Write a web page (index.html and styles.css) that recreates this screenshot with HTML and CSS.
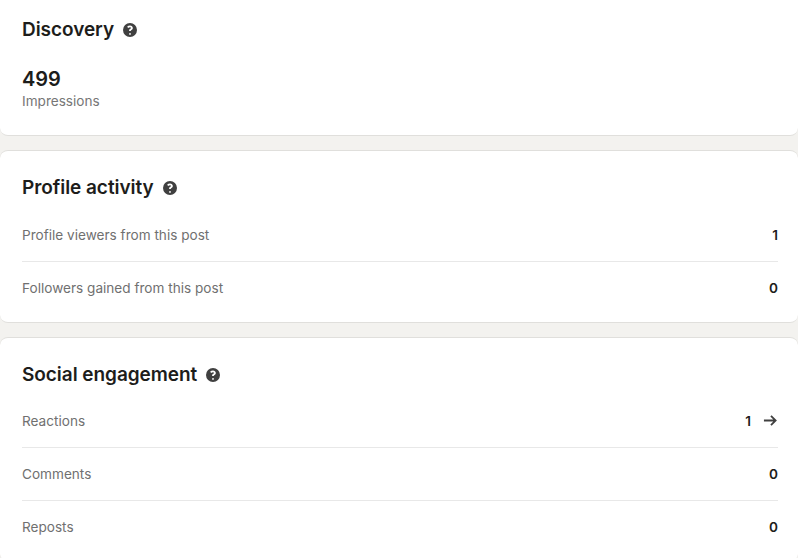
FILE: index.html
```html
<!DOCTYPE html>
<html lang="en">
<head>
    <meta charset="UTF-8">
    <meta name="viewport" content="width=device-width, initial-scale=1.0">
    <title>Post analytics</title>
    <link rel="stylesheet" href="styles.css">
</head>
<body>
    <svg class="sprite" width="0" height="0" aria-hidden="true">
        <symbol id="icon-help" viewBox="0 0 16 16">
            <path fill-rule="evenodd" d="M8 1a7 7 0 1 0 0 14A7 7 0 0 0 8 1zm.9 10.900a.9.9 0 1 1-1.800 0 .9.9 0 0 1 1.800 0zM8 3.600c1.600 0 2.800.9 2.800 2.400 0 1-.6 1.600-1.300 2-.5.3-.7.5-.7.9v.2H7.100v-.4c0-1 .5-1.500 1.100-1.900.5-.3.8-.5.8-.8 0-.4-.4-.7-1-.7-.7 0-1.300.3-1.800.8L5.100 4.800C5.900 4 6.900 3.600 8 3.600z"/>
        </symbol>
    </svg>

    <section class="card card--discovery">
        <h2 class="card__title">Discovery <svg class="card__help"><use href="#icon-help"/></svg></h2>
        <p class="stat__number">499</p>
        <p class="stat__label">Impressions</p>
    </section>

    <section class="card">
        <h2 class="card__title">Profile activity <svg class="card__help"><use href="#icon-help"/></svg></h2>
        <ul class="rows">
            <li class="rows__item"><span>Profile viewers from this post</span><b class="rows__value">1</b></li>
            <li class="rows__item"><span>Followers gained from this post</span><b class="rows__value">0</b></li>
        </ul>
    </section>

    <section class="card">
        <h2 class="card__title">Social engagement <svg class="card__help"><use href="#icon-help"/></svg></h2>
        <ul class="rows rows--social">
            <li class="rows__item">
                <span>Reactions</span>
                <b class="rows__value">1
                    <svg class="rows__arrow" viewBox="0 0 16 16"><path d="M1 8h12.500M8.500 3l5 5-5 5"/></svg>
                </b>
            </li>
            <li class="rows__item"><span>Comments</span><b class="rows__value">0</b></li>
            <li class="rows__item"><span>Reposts</span><b class="rows__value">0</b></li>
        </ul>
    </section>
</body>
</html>
```

FILE: styles.css
```css
* {
    margin: 0;
    padding: 0;
    box-sizing: border-box;
    font-family: Inter, "Liberation Sans", sans-serif;
}

body {
    background-color: #f3f2ef;
    color: #1d1d1b;
    height: 558px;
    overflow: hidden;
}

.sprite {
    display: block;
}

.card {
    background-color: #ffffff;
    border-top: 1px solid #e0dfdc;
    border-bottom: 1px solid #e0dfdc;
    border-radius: 8px;
    margin-bottom: 14px;
    padding: 25px 20px 7px 22px;
}

.card--discovery {
    border-top: none;
    border-radius: 0 0 8px 8px;
    height: 136px;
    padding-top: 18px;
}

.card__title {
    display: flex;
    align-items: center;
    gap: 8px;
    font-size: 19px;
    font-weight: 600;
    line-height: 24px;
    letter-spacing: -0.05px;
}

.card__help {
    width: 16px;
    height: 16px;
    fill: #404040;
}

.stat__number {
    font-size: 20px;
    font-weight: 600;
    line-height: 24px;
    margin-top: 25px;
}

.stat__label {
    font-size: 13.6px;
    line-height: 20px;
    color: #767676;
}

.rows {
    list-style: none;
    margin-top: 9px;
}

.rows--social {
    margin-top: 8px;
}

.rows__item {
    display: flex;
    justify-content: space-between;
    align-items: center;
    height: 53px;
    padding-bottom: 1px;
    font-size: 13.6px;
    color: #707070;
    border-bottom: 1px solid #e8e8e8;
}

.rows__item:last-child {
    border-bottom: none;
}

.rows__value {
    display: flex;
    align-items: center;
    gap: 12px;
    font-weight: 600;
    color: #1d1d1b;
}

.rows__arrow {
    width: 15px;
    height: 15px;
    fill: none;
    stroke: #404040;
    stroke-width: 1.900;
}
```
